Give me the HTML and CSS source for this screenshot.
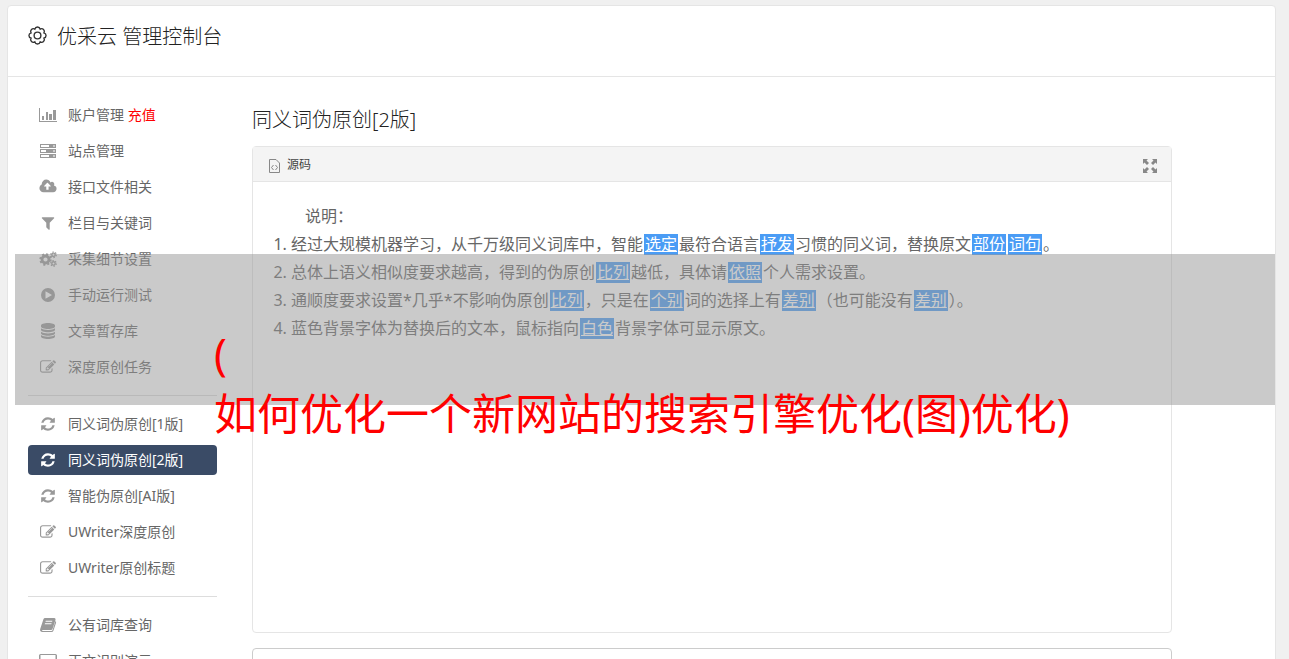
FILE: index.html
```html
<!DOCTYPE html>
<html lang="zh-CN">
<head>
    <meta charset="UTF-8">
    <title>优采云 管理控制台</title>
    <link rel="stylesheet" href="styles.css">
</head>
<body>
<svg class="sprite" width="0" height="0">
    <symbol id="i-refresh" viewBox="0 0 1792 1792"><path d="M1639 1056q0 5-1 7-64 268-268 434.500t-478 166.500q-146 0-282.500-55t-243.500-157l-129 129q-19 19-45 19t-45-19-19-45v-448q0-26 19-45t45-19h448q26 0 45 19t19 45-19 45l-137 137q71 66 161 102t187 36q134 0 250-65t186-179q11-17 53-117 8-23 30-23h192q13 0 22.500 9.500t9.500 22.500zm25-800v448q0 26-19 45t-45 19h-448q-26 0-45-19t-19-45 19-45l138-138q-148-137-349-137-134 0-250 65t-186 179q-11 17-53 117-8 23-30 23h-199q-13 0-22.500-9.500t-9.500-22.500v-7q65-268 270-434.500t480-166.500q146 0 284 55.500t245 156.500l130-129q19-19 45-19t45 19 19 45z"/></symbol>
    <symbol id="i-edit" viewBox="0 0 1792 1792"><path d="M888 1184l116-116-152-152-116 116v56h96v96h56zm440-720q-16-16-33 1l-350 350q-17 17-1 33t33-1l350-350q17-17 1-33zm80 594v190q0 119-84.500 203.500t-203.500 84.500h-832q-119 0-203.500-84.500t-84.500-203.500v-832q0-119 84.500-203.500t203.500-84.500h832q63 0 117 25 15 7 18 23 3 17-9 29l-49 49q-14 14-32 8-23-6-45-6h-832q-66 0-113 47t-47 113v832q0 66 47 113t113 47h832q66 0 113-47t47-113v-126q0-13 9-22l64-64q15-15 35-7t20 29zm-96-738l288 288-672 672h-288v-288zm444 132l-92 92-288-288 92-92q28-28 68-28t68 28l152 152q28 28 28 68t-28 68z"/></symbol>
    <symbol id="i-filter" viewBox="0 0 1792 1792"><path d="M1595 295q17 41-14 70l-493 493v742q0 42-39 59-13 5-25 5-27 0-45-19l-256-256q-19-19-19-45v-486l-493-493q-31-29-14-70 17-39 59-39h1280q42 0 59 39z"/></symbol>
    <symbol id="i-cloud" viewBox="-64 64 1920 1792"><path d="M1216 864q0-14-9-23l-352-352q-9-9-23-9t-23 9l-351 351q-10 12-10 24 0 14 9 23t23 9h224v352q0 13 9.500 22.500t22.500 9.500h192q13 0 22.500-9.500t9.500-22.500v-352h224q13 0 22.500-9.500t9.500-22.500zm640 288q0 159-112.500 271.500t-271.500 112.500h-1088q-185 0-316.500-131.500t-131.500-316.500q0-130 70-240t188-165q-2-30-2-43 0-212 150-362t362-150q156 0 285.500 87t188.500 231q71-62 166-62 106 0 181 75t75 181q0 76-41 138 130 31 213.500 135.500t83.500 238.500z"/></symbol>
    <symbol id="i-chart" viewBox="0 0 18 16"><path d="M0 1h1v13h17v1H0zM3 9h2v4H3zM7 5h2v8H7zM10 7h3v6h-3zM14 3h3v10h-3z"/></symbol>
    <symbol id="i-server" viewBox="0 0 18 16"><path fill-rule="evenodd" d="M1 1h16v4H1zM2 2v2h8V2zM14 2.500v1h2v-1zM1 6h16v4H1zM2 7v2h5V7zM14 7.500v1h2v-1zM1 11h16v4H1zM2 12v2h8v-2zM14 12.500v1h2v-1z"/></symbol>
    <symbol id="i-cogs" viewBox="0 0 18 16">
        <g fill="none" stroke="currentColor">
            <circle cx="6.500" cy="8.500" r="3.500" stroke-width="2.800"/>
            <circle cx="6.500" cy="8.500" r="5.300" stroke-width="1.800" stroke-dasharray="2.080 2.080"/>
            <circle cx="14.500" cy="3.800" r="1.700" stroke-width="1.400"/>
            <circle cx="14.500" cy="3.800" r="2.800" stroke-width="1.200" stroke-dasharray="1.460 1.460"/>
            <circle cx="14.500" cy="12.400" r="1.700" stroke-width="1.400"/>
            <circle cx="14.500" cy="12.400" r="2.800" stroke-width="1.200" stroke-dasharray="1.460 1.460"/>
        </g>
    </symbol>
    <symbol id="i-play" viewBox="0 0 18 16"><path fill-rule="evenodd" d="M9 1a7 7 0 1 1 0 14A7 7 0 0 1 9 1zM6.500 4.300v7.400L13 8z"/></symbol>
    <symbol id="i-db" viewBox="0 0 18 16"><path d="M2 2.500C2 1 5 0 9 0s7 1 7 2.500v1C16 5 13 6 9 6S2 5 2 3.500zM2 5.300C3.500 6.500 6 7 9 7s5.500-.5 7-1.700v1.500C16 8.200 13 9.300 9 9.300S2 8.200 2 6.800zM2 8.700c1.500 1.200 4 1.700 7 1.700s5.500-.5 7-1.700v1.500c0 1.400-3 2.500-7 2.500s-7-1.100-7-2.500zM2 12c1.500 1.200 4 1.700 7 1.700s5.500-.5 7-1.700v1.500C16 14.900 13 16 9 16s-7-1.100-7-2.500z"/></symbol>
    <symbol id="i-book" viewBox="0 0 18 16"><path fill-rule="evenodd" d="M6 1h9.500q1.500.5 1 2l-3 9q-.4 1-1.500 1H3.500q-1 .5 0 1h9q.7 0 1-.8L16.500 4q1 .5.500 2l-2.600 7.700Q14 15 12.500 15H3Q.5 14.300 1.200 12L4.500 2Q5 1 6 1zM6.800 3.800l-.3 1h6.600l.3-1zM6 6.200l-.3 1h6.600l.3-1z"/></symbol>
    <symbol id="i-desktop" viewBox="0 0 18 16"><path fill-rule="evenodd" d="M1.500 1h15q1.500 0 1.500 1.500v8q0 1.500-1.500 1.500H11v2h2v1H5v-1h2v-2H1.500Q0 12 0 10.500v-8Q0 1 1.500 1zM1.500 2v8.500h15V2z"/></symbol>
</svg>

<div class="page">
    <div class="page-head">
        <svg class="gear" viewBox="-9 -9 18 18"><path d="M6.100-2.530A2.600 2.600 0 0 1 6.100 2.530A2.600 2.600 0 0 1 2.530 6.100A2.600 2.600 0 0 1-2.530 6.100A2.600 2.600 0 0 1-6.100 2.530A2.600 2.600 0 0 1-6.100-2.530A2.600 2.600 0 0 1-2.530-6.100A2.600 2.600 0 0 1 2.530-6.100A2.600 2.600 0 0 1 6.100-2.530z"/><circle r="3.200"/></svg>
        <h1>优采云 管理控制台</h1>
    </div>
    <div class="page-body">
        <ul class="menu">
            <li><a href="#"><svg><use href="#i-chart"/></svg>账户管理 <span class="pay">充值</span></a></li>
            <li><a href="#"><svg><use href="#i-server"/></svg>站点管理</a></li>
            <li><a href="#"><svg><use href="#i-cloud"/></svg>接口文件相关</a></li>
            <li><a href="#"><svg><use href="#i-filter"/></svg>栏目与关键词</a></li>
            <li><a href="#"><svg><use href="#i-cogs"/></svg>采集细节设置</a></li>
            <li><a href="#"><svg><use href="#i-play"/></svg>手动运行测试</a></li>
            <li><a href="#"><svg><use href="#i-db"/></svg>文章暂存库</a></li>
            <li><a href="#"><svg><use href="#i-edit"/></svg>深度原创任务</a></li>
            <li class="divider"></li>
            <li><a href="#"><svg><use href="#i-refresh"/></svg>同义词伪原创[1版]</a></li>
            <li class="active"><a href="#"><svg><use href="#i-refresh"/></svg>同义词伪原创[2版]</a></li>
            <li><a href="#"><svg><use href="#i-refresh"/></svg>智能伪原创[AI版]</a></li>
            <li><a href="#"><svg><use href="#i-edit"/></svg>UWriter深度原创</a></li>
            <li><a href="#"><svg><use href="#i-edit"/></svg>UWriter原创标题</a></li>
            <li class="divider"></li>
            <li><a href="#"><svg><use href="#i-book"/></svg>公有词库查询</a></li>
            <li><a href="#"><svg><use href="#i-desktop"/></svg>正文识别演示</a></li>
        </ul>
        <div class="content">
            <h2>同义词伪原创[2版]</h2>
            <div class="editor">
                <div class="toolbar">
                    <button type="button" class="source">
                        <svg width="11" height="14" viewBox="0 0 11 14"><path d="M.5.500H7L10.500 4v9.500H.5zM4.500 6l-2 2.500 2 2.500M6.500 6l2 2.500-2 2.500"/></svg>
                        源码
                    </button>
                    <button type="button" class="full" aria-label="全屏">
                        <svg width="14" height="14" viewBox="0 0 14 14"><path d="M0 0h5L3.500 1.500 6 4 4 6 1.500 3.500 0 5zM14 0v5l-1.500-1.500L10 6 8 4l2.500-2.500L9 0zM0 14V9l1.500 1.500L4 8l2 2-2.500 2.500L5 14zM14 14H9l1.500-1.500L8 10l2-2 2.500 2.500L14 9z"/></svg>
                    </button>
                </div>
                <div class="text">
                    <p>说明：</p>
                    <ol>
                        <li>经过大规模机器学习，从千万级同义词库中，智能<a href="#">选定</a>最符合语言<a href="#">抒发</a>习惯的同义词，替换原文<a href="#">部份</a><a href="#">词句</a>。</li>
                        <li>总体上语义相似度要求越高，得到的伪原创<a href="#">比列</a>越低，具体请<a href="#">依照</a>个人需求设置。</li>
                        <li>通顺度要求设置*几乎*不影响伪原创<a href="#">比列</a>，只是在<a href="#">个别</a>词的选择上有<a href="#">差别</a>（也可能没有<a href="#">差别</a>）。</li>
                        <li>蓝色背景字体为替换后的文本，鼠标指向<a href="#">白色</a>背景字体可显示原文。</li>
                    </ol>
                </div>
            </div>
            <textarea class="result" aria-label="结果"></textarea>
        </div>
    </div>
</div>

<div class="banner">
    <p>(<br>如何优化一个新网站的搜索引擎优化(图)优化)</p>
</div>
</body>
</html>
```
FILE: styles.css
```css
*{
    margin: 0;
    padding: 0;
    box-sizing: border-box;
}
body{
    position: relative;
    padding: 5px 13px 20px 7px;
    background: #f0f0f0;
    color: #666;
    font: 14px/30px "Noto Sans", "Noto Sans CJK SC", sans-serif;
}
ul{
    list-style: none;
}
a{
    color: inherit;
    text-decoration: none;
}
button,
textarea{
    font: inherit;
    color: inherit;
}
svg{
    fill: currentColor;
    flex: none;
}
.sprite{
    position: absolute;
}
.page{
    background: #fff;
    border: 1px solid #e5e5e5;
    border-radius: 4px;
}
.page-head{
    display: flex;
    gap: 10px;
    padding: 16px 20px 24px;
    border-bottom: 1px solid #e5e5e5;
    color: #333;
}
.page-head h1,
.content h2{
    font-size: 20px;
    font-weight: 300;
    line-height: 30px;
    color: #222;
}
.gear{
    width: 19px;
    height: 19px;
    margin-top: 4px;
    fill: none;
    stroke: currentColor;
    stroke-width: 1.3;
}
.page-body{
    display: flex;
    gap: 35px;
    padding: 23px 103px 20px 20px;
}
.menu{
    display: flex;
    flex-direction: column;
    flex: none;
    gap: 6px;
    width: 189px;
}
.menu a{
    display: flex;
    align-items: center;
    height: 30px;
    padding-left: 11px;
    border-radius: 4px;
    white-space: pre;
}
.menu svg{
    width: 18px;
    height: 16px;
    margin-right: 11px;
    color: #999;
}
.menu .pay{
    color: #f00;
}
.menu .active a{
    background: #3a4b66;
    color: #fff;
}
.menu .active svg{
    color: #fff;
}
.menu .divider{
    height: 1px;
    margin: 7px 0;
    background: #ddd;
}
.content{
    flex: 1;
    min-width: 0;
}
.content h2{
    margin: 5px 0 11px;
}
.editor{
    border: 1px solid #e5e5e5;
    border-radius: 4px;
}
.toolbar{
    display: flex;
    justify-content: space-between;
    align-items: center;
    height: 35px;
    padding: 2px 14px 0 16px;
    background: #f4f4f4;
    border-bottom: 1px solid #e5e5e5;
}
.toolbar button{
    display: flex;
    align-items: center;
    gap: 7px;
    border: 0;
    background: none;
    font-size: 12px;
    color: #444;
}
.source svg{
    margin-top: 2px;
    fill: none;
    stroke: #888;
}
.toolbar .full{
    margin-top: 2px;
    color: #888;
}
.text{
    min-height: 450px;
    padding: 20px;
    font-size: 16px;
    line-height: 28px;
}
.text p{
    text-indent: 2em;
}
.text ol{
    padding-left: 18px;
}
.text a{
    display: inline-block;
    margin: 0 1px;
    padding: 0 1px;
    line-height: 21px;
    background: #4a9cf5;
    color: #fff;
    text-decoration: underline;
}
.result{
    display: block;
    width: 100%;
    height: 200px;
    margin-top: 15px;
    border: 1px solid #ccc;
    border-radius: 4px;
    resize: none;
}
/* grey strip over the page */
.banner{
    position: absolute;
    top: 254px;
    left: 15px;
    right: 14px;
    height: 151px;
    padding: 70px 0 0 199px;
    background: rgba(150, 150, 150, .5);
    color: #f00;
    font-size: 43px;
    line-height: 60px;
    white-space: nowrap;
}
```
